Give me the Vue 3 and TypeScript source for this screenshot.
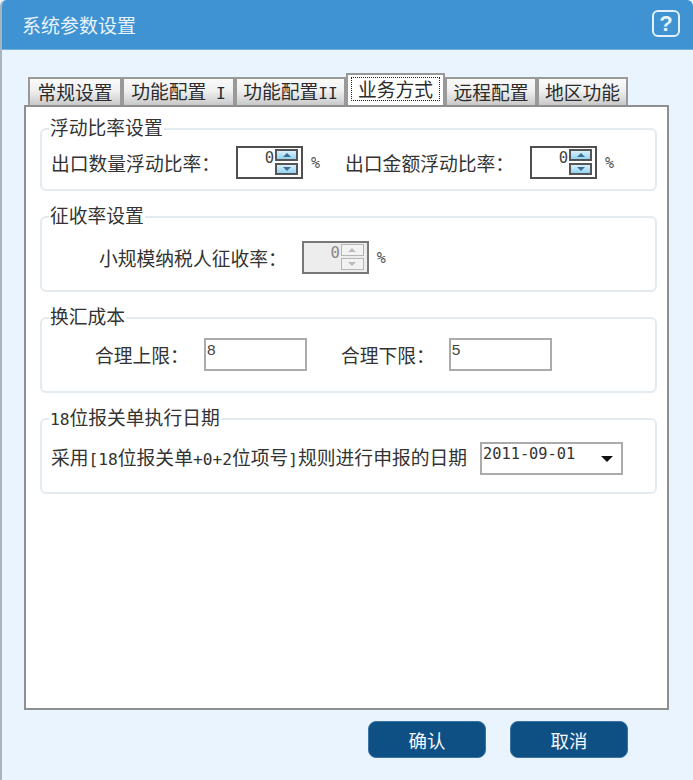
<script setup lang="ts">
const tabs = [
  { label: "常规设置", width: 94 },
  { label: "功能配置", suffix: " I", width: 113 },
  { label: "功能配置", suffix: "II", width: 111 },
  { label: "业务方式", width: 99, active: true },
  { label: "远程配置", width: 92 },
  { label: "地区功能", width: 91 },
]
</script>

<template>
  <div class="dialog">
    <header class="title-bar">
      <span class="title">系统参数设置</span>
      <span class="help">?</span>
    </header>

    <main class="content">
      <div class="tabs">
        <div
          v-for="tab in tabs"
          :key="tab.label + tab.suffix"
          class="tab"
          :class="{ active: tab.active }"
          :style="{ width: tab.width + 'px' }"
        >
          <span class="tab-label">{{ tab.label }}<span v-if="tab.suffix" class="latin">{{ tab.suffix }}</span></span>
        </div>
      </div>

      <div class="panel">
        <fieldset class="group first">
          <legend>浮动比率设置</legend>
          <div class="row">
            <span class="label">出口数量浮动比率：</span>
            <div class="spin spin-a">
              <span class="value">0</span>
              <div class="spin-btns">
                <i class="up"></i>
                <i class="down"></i>
              </div>
            </div>
            <span class="pct">%</span>
            <span class="label second">出口金额浮动比率：</span>
            <div class="spin spin-b">
              <span class="value">0</span>
              <div class="spin-btns">
                <i class="up"></i>
                <i class="down"></i>
              </div>
            </div>
            <span class="pct">%</span>
          </div>
        </fieldset>

        <fieldset class="group">
          <legend>征收率设置</legend>
          <div class="row row-rate">
            <span class="label">小规模纳税人征收率：</span>
            <div class="spin spin-c disabled">
              <span class="value">0</span>
              <div class="spin-btns">
                <i class="up"></i>
                <i class="down"></i>
              </div>
            </div>
            <span class="pct">%</span>
          </div>
        </fieldset>

        <fieldset class="group">
          <legend>换汇成本</legend>
          <div class="row row-cost">
            <span class="label">合理上限：</span>
            <div class="text-box">8</div>
            <span class="label limit-low">合理下限：</span>
            <div class="text-box">5</div>
          </div>
        </fieldset>

        <fieldset class="group">
          <legend><span class="latin">18</span>位报关单执行日期</legend>
          <div class="row row-date">
            <span class="label">采用<span class="latin">[18</span>位报关单<span class="latin">+0+2</span>位项号<span class="latin">]</span>规则进行申报的日期</span>
            <div class="select">
              <span>2011-09-01</span>
              <i class="caret"></i>
            </div>
          </div>
        </fieldset>
      </div>

      <footer class="actions">
        <button class="btn">确认</button>
        <button class="btn">取消</button>
      </footer>
    </main>
  </div>
</template>

<style>
html,
body {
  margin: 0;
  background: #eaf4ff;
}
</style>

<style scoped>
.dialog {
  width: 693px;
  height: 780px;
  box-sizing: border-box;
  display: flex;
  flex-direction: column;
  background: #eaf4ff;
  border-left: 2px solid #a9b4bd;
  border-radius: 6px 6px 0 0;
  overflow: hidden;
  font-family: "Noto Sans CJK SC", sans-serif;
  font-size: 18.8px;
  color: #333;
}

.title-bar {
  height: 50px;
  margin-left: -2px;
  flex: none;
  display: flex;
  align-items: center;
  justify-content: space-between;
  padding: 0 13px 0 22px;
  background: #3f93d3;
  border-bottom: 1px solid #72afdd;
  box-sizing: border-box;
}

.title {
  color: #e8f3fb;
  font-size: 19px;
  line-height: 24px;
}

.help {
  width: 28px;
  height: 27px;
  box-sizing: border-box;
  margin-bottom: 2px;
  border: 2px solid #e4f0fa;
  border-radius: 6px;
  color: #e8f3fb;
  font: bold 22px/23px "Liberation Sans", sans-serif;
  text-align: center;
}

.content {
  flex: 1;
  display: flex;
  flex-direction: column;
  padding: 23px 24px 0 22px;
}

.tabs {
  height: 32px;
  flex: none;
  display: flex;
  align-items: flex-end;
  padding-left: 4px;
}

.tab {
  height: 28px;
  box-sizing: border-box;
  display: flex;
  align-items: center;
  justify-content: center;
  border: 2px solid #999;
  border-bottom: none;
  background: linear-gradient(#fafafa, #f0f0f0 45%, #c9c9c9);
  line-height: 24px;
  color: #2b2b2b;
}

.tab.active {
  height: 32px;
  background: #fff;
  padding: 2px 3px 4px;
}

.tab.active .tab-label {
  flex: 1;
  height: 100%;
  box-sizing: border-box;
  border: 1px dotted #222;
  text-align: center;
  line-height: 22px;
}

.latin {
  font-family: "DejaVu Sans Mono", monospace;
  font-size: 16.2px;
}

.panel {
  height: 605px;
  flex: none;
  box-sizing: border-box;
  padding: 10px 10px 0 14px;
  background: #fff;
  border: 2px solid #8f8f8f;
}

.group {
  height: 87px;
  box-sizing: border-box;
  margin: 14px 0 0;
  padding: 0 9px;
  min-width: 0;
  border: 2px solid #e4ebf0;
  border-radius: 6px;
}

.group.first {
  height: 74px;
  margin-top: 0;
  padding-top: 5px;
}

.group legend {
  height: 24px;
  box-sizing: border-box;
  line-height: 20px;
  padding: 0 1px 4px;
  margin-left: -2px;
  color: #333;
  background: #fff;
}

.row {
  display: flex;
  align-items: center;
  height: 33px;
  white-space: nowrap;
}

.row-rate {
  margin-top: 12px;
  padding-left: 48px;
}

.row-cost {
  margin-top: 8px;
  padding-left: 44px;
}

.row-date {
  margin-top: 11px;
}

.label {
  line-height: 24px;
}

.second {
  margin-left: 25px;
}

.spin {
  width: 67px;
  height: 33px;
  box-sizing: border-box;
  border: 2px solid #4f4f4f;
  background: #fff;
  display: flex;
  justify-content: flex-end;
  align-items: flex-start;
  padding: 1px 3px 1px 2px;
  gap: 1px;
}

.spin-a {
  margin-left: 16px;
}

.spin-b {
  margin-left: 16px;
}

.spin-c {
  margin-left: 15px;
}

.spin.disabled {
  background: #ededed;
  border-color: #777;
}

.value {
  font: 15.6px/19px "DejaVu Sans Mono", monospace;
  color: #444;
}

.disabled .value {
  color: #888;
}

.spin-btns {
  width: 23px;
  height: 26px;
  display: flex;
  flex-direction: column;
  justify-content: space-between;
}

.spin-btns i {
  height: 12px;
  box-sizing: border-box;
  display: flex;
  align-items: center;
  justify-content: center;
  border: 2px solid #555;
  background: linear-gradient(#d9f0fb, #92d3f1);
}

.disabled .spin-btns i {
  border: 1px solid #b5b5b5;
  background: #f2f2f2;
}

.spin-btns i::after {
  content: "";
  border-left: 4px solid transparent;
  border-right: 4px solid transparent;
}

.spin-btns .up::after {
  border-bottom: 4px solid #3d6f94;
}

.spin-btns .down::after {
  border-top: 4px solid #3d6f94;
}

.disabled .spin-btns .up::after {
  border-bottom-color: #bbb;
}

.disabled .spin-btns .down::after {
  border-top-color: #bbb;
}

.pct {
  margin-left: 8px;
  font: 15px "DejaVu Sans Mono", monospace;
  color: #555;
}

.text-box {
  width: 103px;
  height: 33px;
  margin-left: 15px;
  box-sizing: border-box;
  border: 2px solid #ababab;
  background: #fff;
  padding-left: 1px;
  font: 15.5px/20px "Liberation Sans", sans-serif;
  color: #444;
}

.limit-low {
  margin-left: 34px;
}

.limit-low + .text-box {
  margin-left: 14px;
}

.select {
  width: 143px;
  height: 33px;
  margin-left: 13px;
  box-sizing: border-box;
  display: flex;
  justify-content: space-between;
  padding: 0 8px 0 1px;
  border: 2px solid #ababab;
  background: #fff;
  font: 15.3px/20px "DejaVu Sans Mono", monospace;
  color: #333;
}

.caret {
  margin-top: 12px;
  height: 0;
  border-left: 6px solid transparent;
  border-right: 6px solid transparent;
  border-top: 6px solid #111;
}

.actions {
  display: flex;
  justify-content: flex-end;
  gap: 24px;
  padding: 11px 41px 0 0;
}

.btn {
  width: 118px;
  height: 37px;
  padding: 0;
  border: 1px solid #3a74a5;
  border-radius: 8px;
  background: #0e4f84;
  color: #f2f7fb;
  font-family: "Noto Sans CJK SC", sans-serif;
  font-size: 18.5px;
  line-height: 24px;
}
</style>
